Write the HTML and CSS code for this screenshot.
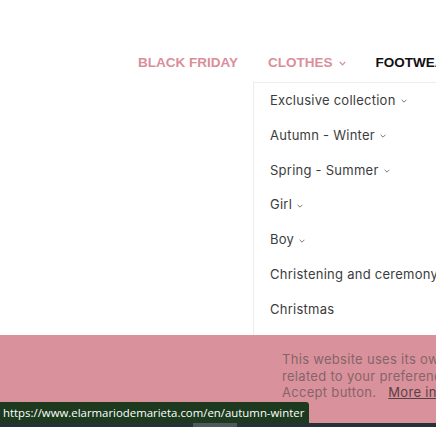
FILE: index.html
```html
<!DOCTYPE html>
<html lang="en">
<head>
<meta charset="utf-8">
<title>Menu</title>
<link rel="stylesheet" href="styles.css">
</head>
<body>
<div class="page">
  <nav class="menu">
    <ul class="menu-list">
      <li class="menu-item pink">BLACK FRIDAY</li>
      <li class="menu-item pink has-dd">
        <span class="label">CLOTHES
          <svg class="chev" width="7" height="5" viewBox="0 0 7 5"><polyline points="0.8,1 3.5,3.8 6.2,1" fill="none" stroke="currentColor" stroke-width="1.2"/></svg>
        </span>
        <ul class="dropdown">
          <li class="dd-item">Exclusive collection <svg class="dchev" width="6" height="4" viewBox="0 0 6 4"><polyline points="0.6,0.8 3,3.2 5.4,0.8" fill="none" stroke="currentColor" stroke-width="1"/></svg></li>
          <li class="dd-item">Autumn - Winter <svg class="dchev" width="6" height="4" viewBox="0 0 6 4"><polyline points="0.6,0.8 3,3.2 5.4,0.8" fill="none" stroke="currentColor" stroke-width="1"/></svg></li>
          <li class="dd-item">Spring - Summer <svg class="dchev" width="6" height="4" viewBox="0 0 6 4"><polyline points="0.6,0.8 3,3.2 5.4,0.8" fill="none" stroke="currentColor" stroke-width="1"/></svg></li>
          <li class="dd-item">Girl <svg class="dchev" width="6" height="4" viewBox="0 0 6 4"><polyline points="0.6,0.8 3,3.2 5.4,0.8" fill="none" stroke="currentColor" stroke-width="1"/></svg></li>
          <li class="dd-item">Boy <svg class="dchev" width="6" height="4" viewBox="0 0 6 4"><polyline points="0.6,0.8 3,3.2 5.4,0.8" fill="none" stroke="currentColor" stroke-width="1"/></svg></li>
          <li class="dd-item">Christening and ceremony</li>
          <li class="dd-item">Christmas</li>
        </ul>
      </li>
      <li class="menu-item dark">FOOTWEAR</li>
    </ul>
  </nav>

  <div class="cookie">
    <div class="cookie-body">
      <p class="cookie-text">This website uses its own and third-party cookies to improve our services and show you advertising<br>related to your preferences by analyzing your browsing habits. To give your consent to its use, press the<br>Accept button. &nbsp;&nbsp;<a class="more">More information</a></p>
    </div>
    <div class="cookie-foot">
      <span class="foot-block"></span>
    </div>
  </div>

  <div class="status">https://www.elarmariodemarieta.com/en/autumn-winter</div>
</div>
</body>
</html>
```

FILE: styles.css
```css
html, body {
  margin: 0;
  padding: 0;
  background: #fff;
}
.page {
  position: relative;
  width: 436px;
  height: 427px;
  overflow: hidden;
  font-family: Arial, "Liberation Sans", sans-serif;
}
.menu {
  padding-left: 123px;
}
.menu-list {
  list-style: none;
  margin: 0;
  padding: 0;
  display: flex;
  white-space: nowrap;
}
.menu-item {
  position: relative;
  padding: 55px 15px 11px;
  font-family: "Liberation Sans", Arial, sans-serif;
  font-weight: bold;
  font-size: 13.5px;
  line-height: 16px;
}
.pink { color: #d98f9a; }
.dark { color: #111; }
.label {
  display: inline-flex;
  align-items: center;
  gap: 6px;
}
.chev { display: block; margin-top: 1px; }
.dropdown {
  position: absolute;
  top: 100%;
  left: 0;
  width: 240px;
  height: 253px;
  margin: 0;
  padding: 0;
  list-style: none;
  background: #fff;
  border-top: 1px solid #ececec;
  border-left: 1px solid #ececec;
}
.dd-item {
  padding: 10px 16px;
  line-height: 14.8px;
  font-family: Inter, sans-serif;
  font-weight: normal;
  font-size: 13px;
  letter-spacing: 0.25px;
  color: #3c3c3c;
  display: flex;
  align-items: center;
  gap: 5px;
  white-space: nowrap;
}
.dchev { display: block; margin-top: 2px; color: #777; }

.cookie {
  position: absolute;
  left: 0;
  right: 0;
  bottom: 0;
  height: 92px;
  background: #d9929b;
  display: flex;
  flex-direction: column;
}
.cookie-body {
  flex: 1;
  padding: 16px 0 0 282px;
}
.cookie-text {
  margin: 0;
  white-space: nowrap;
  font-family: Inter, sans-serif;
  font-size: 13px;
  letter-spacing: 0.3px;
  line-height: 16.5px;
  color: #86646b;
}
.more {
  color: #5a3f44;
  text-decoration: underline;
}
.cookie-foot {
  height: 4px;
  background: #253238;
  padding-left: 193px;
}
.foot-block {
  display: block;
  width: 44px;
  height: 4px;
  background: #4c5a60;
}
.status {
  position: absolute;
  left: 0;
  bottom: 4px;
  height: 21px;
  padding: 0 5px 0 3px;
  background: #1d3a1f;
  color: #ffffff;
  border-top-right-radius: 3px;
  font-family: "Open Sans", sans-serif;
  font-size: 11.4px;
  line-height: 21px;
  white-space: nowrap;
}
```
